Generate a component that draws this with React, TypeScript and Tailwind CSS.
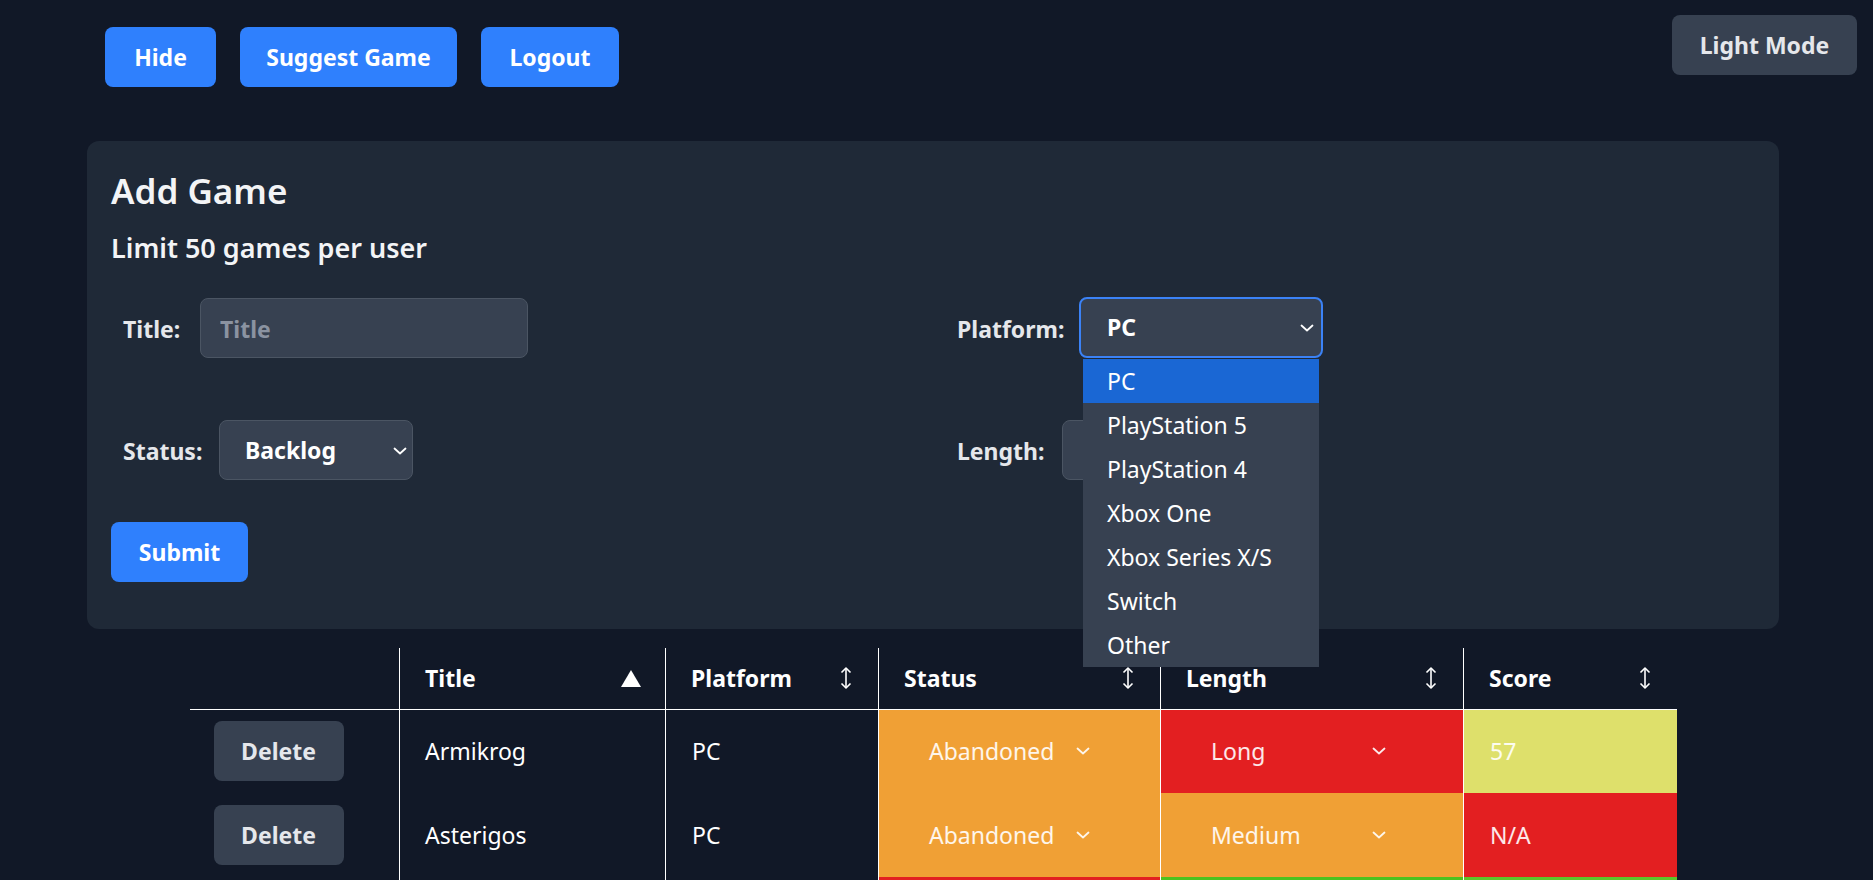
import React from 'react';

type Row = {
  title: string;
  platform: string;
  status: string;
  length: string;
  score: string;
};

const ROWS: Row[] = [
  { title: 'Armikrog', platform: 'PC', status: 'Abandoned', length: 'Long', score: '57' },
  { title: 'Asterigos', platform: 'PC', status: 'Abandoned', length: 'Medium', score: 'N/A' },
  { title: "Baldur's Gate 3", platform: 'PC', status: 'Backlog', length: 'Short', score: '96' },
  { title: 'Celeste', platform: 'Switch', status: 'Backlog', length: 'Short', score: '94' },
];

const STATUS_BG: Record<string, string> = {
  Abandoned: 'bg-[#f0a035]',
  Backlog: 'bg-[#e31f21]',
  Completed: 'bg-[#4cc21f]',
};

const LENGTH_BG: Record<string, string> = {
  Long: 'bg-[#e31f21]',
  Medium: 'bg-[#f0a035]',
  Short: 'bg-[#4cc21f]',
};

const scoreBg = (score: string) => {
  if (score === 'N/A') return 'bg-[#e31f21]';
  const n = Number(score);
  if (n >= 80) return 'bg-[#5cc52a]';
  if (n >= 50) return 'bg-[#dee06b]';
  return 'bg-[#e31f21]';
};

const PLATFORMS = ['PC', 'PlayStation 5', 'PlayStation 4', 'Xbox One', 'Xbox Series X/S', 'Switch', 'Other'];

const Chevron: React.FC<{ className?: string }> = ({ className }) => (
  <svg width="14" height="8" viewBox="0 0 14 8" className={className} fill="none">
    <polyline points="1.5,1.5 7,6.5 12.5,1.5" stroke="currentColor" strokeWidth="1.8" strokeLinecap="round" strokeLinejoin="round" />
  </svg>
);

const SortBoth: React.FC = () => (
  <svg width="12" height="24" viewBox="0 0 12 24" fill="none" className="text-white">
    <line x1="6" y1="2" x2="6" y2="22" stroke="currentColor" strokeWidth="1.6" />
    <polyline points="1.5,6.5 6,2 10.5,6.5" stroke="currentColor" strokeWidth="1.6" strokeLinejoin="round" />
    <polyline points="1.5,17.5 6,22 10.5,17.5" stroke="currentColor" strokeWidth="1.6" strokeLinejoin="round" />
  </svg>
);

const SortUp: React.FC = () => (
  <svg width="20" height="17" viewBox="0 0 20 17">
    <polygon points="10,0 20,17 0,17" fill="white" />
  </svg>
);

const BlueButton: React.FC<{ width: string; children: React.ReactNode }> = ({ width, children }) => (
  <button className={`${width} h-[60px] rounded-lg bg-[#2f80fd] text-[23px] font-bold text-white`}>{children}</button>
);

const HeaderCell: React.FC<{ label: string; width: string; sort?: 'up' | 'both'; first?: boolean }> = ({
  label,
  width,
  sort,
  first,
}) => (
  <th className={`${width} h-[61px] border-b border-white p-0 text-left align-middle ${first ? '' : 'border-l'}`}>
    <div className="flex items-center justify-between pl-[25px] pr-[24px]">
      <span className="text-[23px] font-bold text-white">{label}</span>
      {sort === 'up' && <SortUp />}
      {sort === 'both' && (
        <span className="pr-[2px]">
          <SortBoth />
        </span>
      )}
    </div>
  </th>
);

const CellSelect: React.FC<{ value: string; width: string }> = ({ value, width }) => (
  <div className={`relative ${width} ml-[24px] flex h-[60px] items-center pl-[26px] text-[23px] text-white/90`}>
    <span>{value}</span>
    <Chevron className="absolute right-[7px] top-[26px] text-white/90" />
  </div>
);

export default function App() {
  return (
    <div className="relative min-h-screen bg-[#111827] font-['Noto_Sans',sans-serif] text-white">
      <button className="fixed right-[16px] top-[15px] z-20 h-[60px] w-[185px] rounded-lg bg-[#374151] text-[23px] font-bold text-gray-200">
        Light Mode
      </button>

      <div className="ml-[87px] w-[1692px] pt-[27px]">
        {/* Top actions */}
        <div className="flex gap-[24px] pl-[18px]">
          <BlueButton width="w-[111px]">Hide</BlueButton>
          <BlueButton width="w-[217px]">Suggest Game</BlueButton>
          <BlueButton width="w-[138px]">Logout</BlueButton>
        </div>

        {/* Add game card */}
        <section className="mt-[54px] rounded-xl bg-[#1f2937] px-[24px] pb-[47px] pt-[28px]">
          <h2 className="text-[35px] font-semibold leading-[44px] text-gray-100">Add Game</h2>
          <h3 className="mt-[18px] text-[27px] font-semibold leading-[34px] text-gray-100">Limit 50 games per user</h3>

          <div className="mt-[32px] grid grid-cols-2 gap-x-[24px] gap-y-[62px]">
            <div className="flex items-center gap-[24px] pl-[12px] pt-[3px]">
              <label className="w-[53px] whitespace-nowrap text-[23px] font-bold text-gray-200">Title:</label>
              <input
                placeholder="Title"
                className="-mt-[3px] h-[60px] w-[328px] rounded-lg border border-[#4b5563] bg-[#374151] pl-[19px] pt-[3px] text-[23px] font-bold text-white outline-none placeholder:text-[#8b93a1]"
              />
            </div>

            <div className="flex items-center gap-[22px] pl-[12px]">
              <label className="w-[100px] whitespace-nowrap pt-[3px] text-[23px] font-bold text-gray-200">Platform:</label>
              <div className="relative">
                <div className="flex h-[61px] w-[244px] items-center rounded-lg border-2 border-[#3b82f6] bg-[#374151] pl-[26px] text-[23px] font-bold text-white">
                  PC
                  <Chevron className="absolute right-[9px] top-[27px] text-white" />
                </div>
                <ul className="absolute left-[4px] top-[62px] z-30 w-[236px] bg-[#374151] text-[23px] text-white">
                  {PLATFORMS.map((p, i) => (
                    <li key={p} className={`h-[44px] pl-[24px] leading-[44px] ${i === 0 ? 'bg-[#1a67d4]' : ''}`}>
                      {p}
                    </li>
                  ))}
                </ul>
              </div>
            </div>

            <div className="flex items-center gap-[24px] pl-[12px]">
              <label className="w-[72px] whitespace-nowrap pt-[3px] text-[23px] font-bold text-gray-200">Status:</label>
              <div className="relative flex h-[60px] w-[194px] items-center rounded-lg border border-[#4b5563] bg-[#374151] pl-[25px] text-[23px] font-bold text-white">
                Backlog
                <Chevron className="absolute right-[5px] top-[26px] text-white" />
              </div>
            </div>

            <div className="flex items-center gap-[24px] pl-[12px]">
              <label className="w-[81px] whitespace-nowrap pt-[3px] text-[23px] font-bold text-gray-200">Length:</label>
              <div className="relative h-[60px] w-[200px] rounded-lg border border-[#4b5563] bg-[#374151]" />
            </div>
          </div>

          <button className="mt-[42px] h-[60px] w-[137px] rounded-lg bg-[#2f80fd] text-[23px] font-bold text-white">
            Submit
          </button>
        </section>

        {/* Games table */}
        <table className="mx-auto mt-[19px] w-[1487px] table-fixed border-collapse">
          <thead>
            <tr>
              <HeaderCell label="" width="w-[210px]" first />
              <HeaderCell label="Title" width="w-[266px]" sort="up" />
              <HeaderCell label="Platform" width="w-[213px]" sort="both" />
              <HeaderCell label="Status" width="w-[282px]" sort="both" />
              <HeaderCell label="Length" width="w-[303px]" sort="both" />
              <HeaderCell label="Score" width="w-[213px]" sort="both" />
            </tr>
          </thead>
          <tbody>
            {ROWS.map((r) => (
              <tr key={r.title} className="h-[84px]">
                <td className="p-0 pl-[24px]">
                  <button className="h-[60px] w-[130px] rounded-lg bg-[#374151] text-[23px] font-bold text-gray-200">
                    Delete
                  </button>
                </td>
                <td className="border-l border-white p-0 pl-[25px] text-[23px] text-white">{r.title}</td>
                <td className="border-l border-white p-0 pl-[26px] text-[23px] text-white">{r.platform}</td>
                <td className={`border-l border-white p-0 ${STATUS_BG[r.status]}`}>
                  <CellSelect value={r.status} width="w-[194px]" />
                </td>
                <td className={`border-l border-white p-0 ${LENGTH_BG[r.length]}`}>
                  <CellSelect value={r.length} width="w-[208px]" />
                </td>
                <td className={`border-l border-white p-0 pl-[26px] text-[23px] text-white/90 ${scoreBg(r.score)}`}>
                  {r.score}
                </td>
              </tr>
            ))}
          </tbody>
        </table>
      </div>
    </div>
  );
}
